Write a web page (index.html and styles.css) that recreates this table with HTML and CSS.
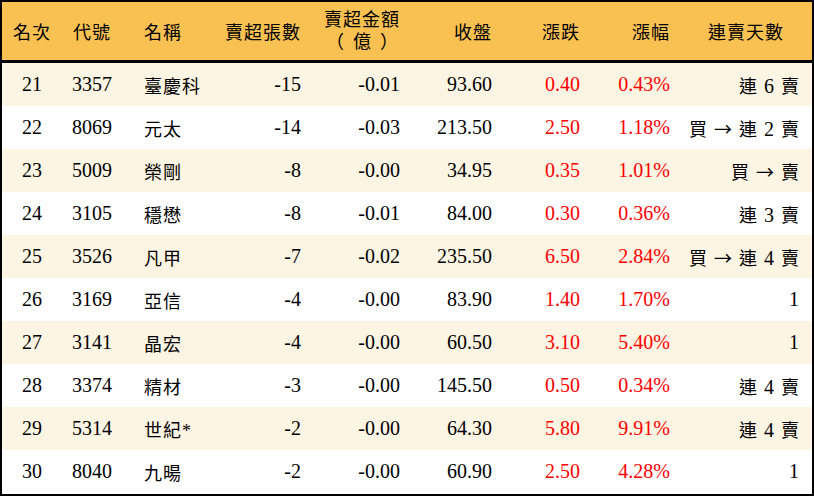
FILE: index.html
```html
<!DOCTYPE html>
<html lang="zh-Hant">
<head>
<meta charset="utf-8">
<link rel="stylesheet" href="styles.css">
</head>
<body>
<div class="board">
  <div class="row head">
    <div class="c center">名次</div>
    <div class="c center">代號</div>
    <div class="c left">名稱</div>
    <div class="c right">賣超張數</div>
    <div class="c right"><div class="two">賣超金額<br><span class="paren">（億）</span></div></div>
    <div class="c right">收盤</div>
    <div class="c right">漲跌</div>
    <div class="c right">漲幅</div>
    <div class="c center">連賣天數</div>
  </div>

  <div class="row odd">
    <div class="c center">21</div><div class="c center">3357</div><div class="c left name">臺慶科</div>
    <div class="c right">-15</div><div class="c right">-0.01</div><div class="c right">93.60</div>
    <div class="c right up">0.40</div><div class="c right up">0.43%</div><div class="c right last"><span><span class="k">連</span> 6 <span class="k">賣</span></span></div>
  </div>
  <div class="row">
    <div class="c center">22</div><div class="c center">8069</div><div class="c left name">元太</div>
    <div class="c right">-14</div><div class="c right">-0.03</div><div class="c right">213.50</div>
    <div class="c right up">2.50</div><div class="c right up">1.18%</div><div class="c right last"><span><span class="k">買</span> <span class="arrow">→</span> <span class="k">連</span> 2 <span class="k">賣</span></span></div>
  </div>
  <div class="row odd">
    <div class="c center">23</div><div class="c center">5009</div><div class="c left name">榮剛</div>
    <div class="c right">-8</div><div class="c right">-0.00</div><div class="c right">34.95</div>
    <div class="c right up">0.35</div><div class="c right up">1.01%</div><div class="c right last"><span><span class="k">買</span> <span class="arrow">→</span> <span class="k">賣</span></span></div>
  </div>
  <div class="row">
    <div class="c center">24</div><div class="c center">3105</div><div class="c left name">穩懋</div>
    <div class="c right">-8</div><div class="c right">-0.01</div><div class="c right">84.00</div>
    <div class="c right up">0.30</div><div class="c right up">0.36%</div><div class="c right last"><span><span class="k">連</span> 3 <span class="k">賣</span></span></div>
  </div>
  <div class="row odd">
    <div class="c center">25</div><div class="c center">3526</div><div class="c left name">凡甲</div>
    <div class="c right">-7</div><div class="c right">-0.02</div><div class="c right">235.50</div>
    <div class="c right up">6.50</div><div class="c right up">2.84%</div><div class="c right last"><span><span class="k">買</span> <span class="arrow">→</span> <span class="k">連</span> 4 <span class="k">賣</span></span></div>
  </div>
  <div class="row">
    <div class="c center">26</div><div class="c center">3169</div><div class="c left name">亞信</div>
    <div class="c right">-4</div><div class="c right">-0.00</div><div class="c right">83.90</div>
    <div class="c right up">1.40</div><div class="c right up">1.70%</div><div class="c right last">1</div>
  </div>
  <div class="row odd">
    <div class="c center">27</div><div class="c center">3141</div><div class="c left name">晶宏</div>
    <div class="c right">-4</div><div class="c right">-0.00</div><div class="c right">60.50</div>
    <div class="c right up">3.10</div><div class="c right up">5.40%</div><div class="c right last">1</div>
  </div>
  <div class="row">
    <div class="c center">28</div><div class="c center">3374</div><div class="c left name">精材</div>
    <div class="c right">-3</div><div class="c right">-0.00</div><div class="c right">145.50</div>
    <div class="c right up">0.50</div><div class="c right up">0.34%</div><div class="c right last"><span><span class="k">連</span> 4 <span class="k">賣</span></span></div>
  </div>
  <div class="row odd">
    <div class="c center">29</div><div class="c center">5314</div><div class="c left name">世紀*</div>
    <div class="c right">-2</div><div class="c right">-0.00</div><div class="c right">64.30</div>
    <div class="c right up">5.80</div><div class="c right up">9.91%</div><div class="c right last"><span><span class="k">連</span> 4 <span class="k">賣</span></span></div>
  </div>
  <div class="row">
    <div class="c center">30</div><div class="c center">8040</div><div class="c left name">九暘</div>
    <div class="c right">-2</div><div class="c right">-0.00</div><div class="c right">60.90</div>
    <div class="c right up">2.50</div><div class="c right up">4.28%</div><div class="c right last">1</div>
  </div>
</div>
</body>
</html>
```

FILE: styles.css
```css
html, body {
  margin: 0;
  padding: 0;
  background: #ffffff;
}
.board {
  width: 814px;
  height: 496px;
  box-sizing: border-box;
  border: 2px solid #000;
  background: #ffffff;
  font-family: "Liberation Serif", "Noto Sans CJK TC", serif;
  font-size: 20px;
  color: #000;
  display: flex;
  flex-direction: column;
}
.row {
  display: grid;
  grid-template-columns: 60px 60px 88px 100px 100px 90px 90px 90px 132px;
  height: 43px;
  background: #ffffff;
}
.row.odd {
  background: #fdf5e3;
}
.row.head {
  height: 58px;
  background: #f9c152;
  border-bottom: 3px solid #000;
  font-size: 18px;
  letter-spacing: 1px;
}
.c {
  display: flex;
  align-items: center;
  white-space: pre;
}
.center { justify-content: center; }
.left { justify-content: flex-start; padding-left: 22px; }
.right { justify-content: flex-end; padding-right: 10px; }
.row .c:nth-child(4) { padding-right: 9px; }
.row .c:nth-child(6) { padding-right: 8px; }
.name { font-size: 18px; letter-spacing: 1px; }
.up { color: #ff0000; }
.last { padding-right: 13px; word-spacing: 2px; }
.k { font-size: 18px; }
.arrow {
  font-family: "Noto Sans CJK TC", sans-serif;
  font-size: 18px;
}
.two {
  text-align: center;
  line-height: 22px;
}
.paren {
  letter-spacing: 9px;
  margin-right: -9px;
}
```
